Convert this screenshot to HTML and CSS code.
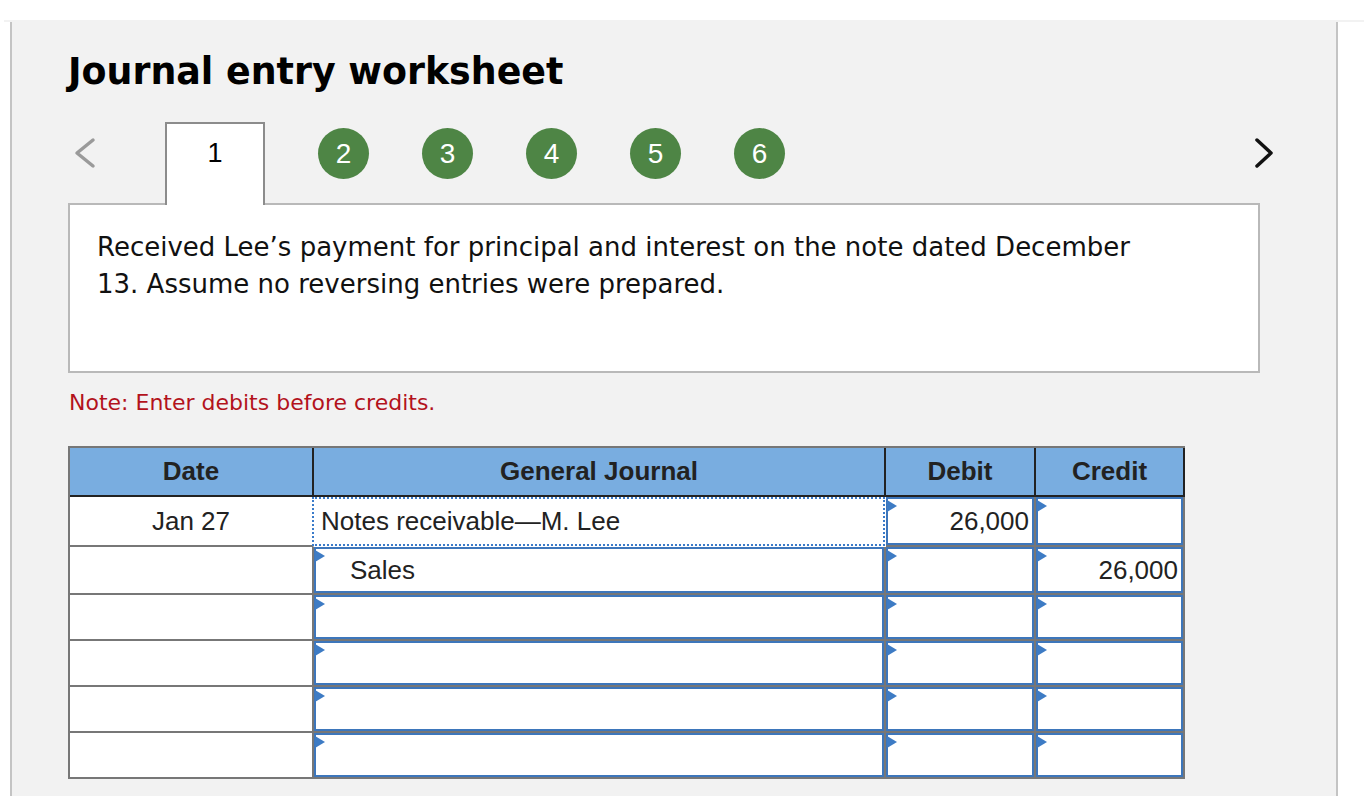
FILE: index.html
```html
<!DOCTYPE html>
<html lang="en">
<head>
<meta charset="utf-8">
<title>Journal entry worksheet</title>
<link rel="stylesheet" href="styles.css">
</head>
<body>
<div class="page">
  <div class="page-edge"></div>
  <main class="panel">
    <h1 class="title">Journal entry worksheet</h1>
    <nav class="steps">
      <svg class="chev chev-prev" width="26" height="32" viewBox="0 0 26 32" aria-hidden="true"><path d="M21 3 L5 16 L21 29"/></svg>
      <div class="tab">1</div>
      <span class="step">2</span>
      <span class="step">3</span>
      <span class="step">4</span>
      <span class="step">5</span>
      <span class="step">6</span>
      <svg class="chev chev-next" width="26" height="32" viewBox="0 0 26 32" aria-hidden="true"><path d="M5 3 L19 16 L5 29"/></svg>
    </nav>
    <div class="question">
      <p>Received Lee’s payment for principal and interest on the note dated December 13. Assume no reversing entries were prepared.</p>
    </div>
    <p class="note">Note: Enter debits before credits.</p>
    <div class="journal">
      <div class="th">Date</div>
      <div class="th">General Journal</div>
      <div class="th">Debit</div>
      <div class="th">Credit</div>

      <div class="td date first">Jan 27</div>
      <div class="td account selected">Notes receivable—M. Lee</div>
      <div class="td input"><div class="field num"><i class="flag"></i>26,000</div></div>
      <div class="td input"><div class="field num"><i class="flag"></i></div></div>

      <div class="td date"></div>
      <div class="td input"><div class="field credit-acct"><i class="flag"></i>Sales</div></div>
      <div class="td input"><div class="field num"><i class="flag"></i></div></div>
      <div class="td input"><div class="field num"><i class="flag"></i>26,000</div></div>

      <div class="td date"></div>
      <div class="td input"><div class="field"><i class="flag"></i></div></div>
      <div class="td input"><div class="field num"><i class="flag"></i></div></div>
      <div class="td input"><div class="field num"><i class="flag"></i></div></div>

      <div class="td date"></div>
      <div class="td input"><div class="field"><i class="flag"></i></div></div>
      <div class="td input"><div class="field num"><i class="flag"></i></div></div>
      <div class="td input"><div class="field num"><i class="flag"></i></div></div>

      <div class="td date"></div>
      <div class="td input"><div class="field"><i class="flag"></i></div></div>
      <div class="td input"><div class="field num"><i class="flag"></i></div></div>
      <div class="td input"><div class="field num"><i class="flag"></i></div></div>

      <div class="td date"></div>
      <div class="td input"><div class="field"><i class="flag"></i></div></div>
      <div class="td input"><div class="field num"><i class="flag"></i></div></div>
      <div class="td input"><div class="field num"><i class="flag"></i></div></div>
    </div>
  </main>
</div>
</body>
</html>
```

FILE: styles.css
```css
html, body {
  margin: 0;
  padding: 0;
  background: #ffffff;
}

body {
  font-family: "DejaVu Sans", Verdana, sans-serif;
  color: #000;
}

.page {
  padding-top: 20px;
}

.page-edge {
  height: 2px;
  margin-left: 4px;
  background: #f2f2f2;
}

.panel {
  display: block;
  box-sizing: border-box;
  width: 1328px;
  min-height: 774px;
  margin-left: 10px;
  padding: 28px 76px 0 56px;
  background: #f2f2f2;
  border-left: 2px solid #c4c4c4;
  border-right: 2px solid #c4c4c4;
}

.title {
  margin: 0;
  font-size: 36.4px;
  line-height: 44px;
  font-weight: bold;
  color: #000;
}

/* step navigation */
.steps {
  display: flex;
  align-items: flex-start;
  margin-top: 28px;
}

.chev {
  flex: none;
  margin-top: 15px;
  fill: none;
  stroke-width: 3.5;
  stroke-linecap: round;
  stroke-linejoin: round;
}

.chev-prev {
  margin-left: 4px;
  stroke: #9a9a9a;
}

.chev-next {
  margin-left: auto;
  margin-right: -18px;
  stroke: #111;
}

.tab {
  position: relative;
  z-index: 1;
  box-sizing: border-box;
  width: 100px;
  height: 83px;
  margin-left: 67px;
  margin-bottom: -2px;
  padding-top: 14px;
  background: #fff;
  border: 2px solid #8c8c8c;
  border-bottom: none;
  text-align: center;
  font-family: "Liberation Sans", Arial, sans-serif;
  font-size: 27px;
  line-height: 30px;
  color: #000;
}

.step {
  flex: none;
  width: 51px;
  height: 51px;
  margin-top: 6px;
  margin-left: 53px;
  border-radius: 50%;
  background: #4e8545;
  color: #fff;
  font-family: "Liberation Sans", Arial, sans-serif;
  font-size: 28px;
  line-height: 51px;
  text-align: center;
}

/* question text */
.question {
  box-sizing: border-box;
  height: 170px;
  background: #fff;
  border: 2px solid #b9b9b9;
  padding: 24px 110px 0 27px;
}

.question p {
  margin: 0;
  font-size: 26px;
  line-height: 37px;
  color: #111;
}

.note {
  margin: 17px 0 30px 1px;
  font-size: 22px;
  line-height: 26px;
  color: #b3121c;
}

/* journal grid */
.journal {
  display: grid;
  grid-template-columns: 244px 572px 150px 149px;
  grid-template-rows: 49px 50px 48px repeat(4, 46px);
  width: max-content;
  border-top: 2px solid #777;
  border-left: 2px solid #777;
  font-family: "Liberation Sans", Arial, sans-serif;
  font-size: 26px;
  color: #222;
}

.th,
.td {
  box-sizing: border-box;
  display: flex;
  align-items: center;
  border-right: 2px solid #777;
  border-bottom: 2px solid #777;
  background: #fff;
}

.th {
  justify-content: center;
  background: #79ade0;
  border-right-color: #222;
  border-bottom-color: #222;
  font-weight: bold;
  color: #222;
}

.td.date {
  justify-content: center;
}

.td.date.first {
  border-right-color: #fff;
}

.td.account {
  padding-left: 7px;
}

.td.selected {
  position: relative;
  border-right-color: #fff;
  border-bottom-color: #fff;
}

.td.selected::after {
  content: "";
  position: absolute;
  left: -2px;
  top: 0;
  right: -1px;
  bottom: -1px;
  border: 2px dotted #3b7bc9;
}

.td.input {
  align-items: stretch;
}

.field {
  position: relative;
  box-sizing: border-box;
  flex: 1;
  display: flex;
  align-items: center;
  border: 2px solid #3d76bb;
  background: #fff;
}

.field.num {
  justify-content: flex-end;
  padding-right: 3px;
}

.field.credit-acct {
  padding-left: 34px;
}

.flag {
  position: absolute;
  left: -1px;
  top: 1px;
  width: 0;
  height: 0;
  border-top: 6px solid transparent;
  border-bottom: 6px solid transparent;
  border-left: 10px solid #3d7bc4;
}
```
